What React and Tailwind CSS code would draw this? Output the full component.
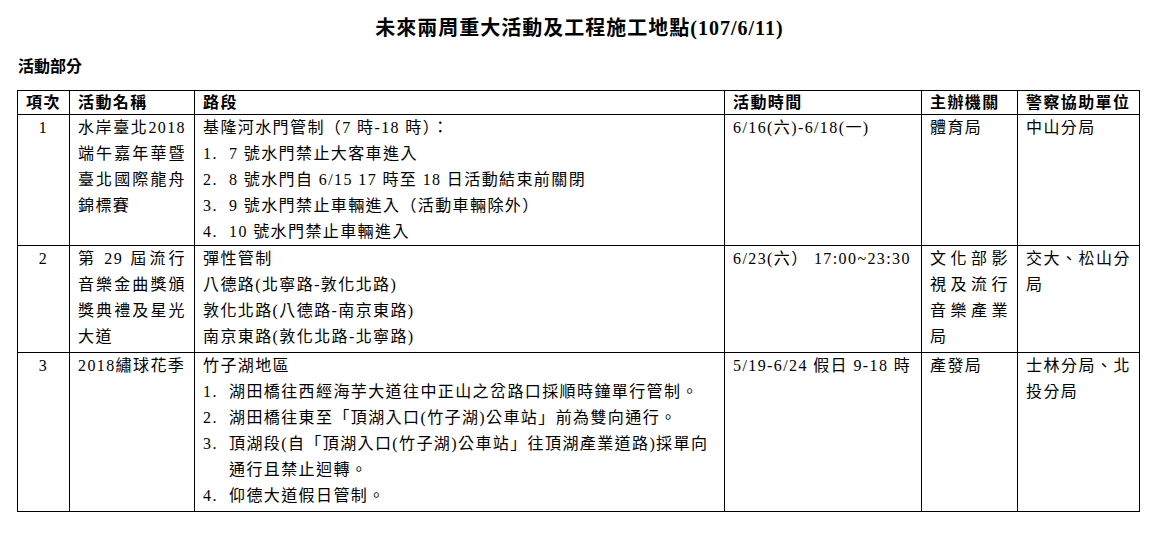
import React from "react";

const J = "[text-align-last:justify]";

const Lines = ({ lines, justify = 0 }) => (
  <div>
    {lines.map((t, i) => (
      <div
        key={i}
        className={
          i < justify
            ? "h-[26px] leading-[26px] whitespace-nowrap [text-align-last:justify]"
            : "h-[26px] leading-[26px] whitespace-nowrap"
        }
      >
        {t}
      </div>
    ))}
  </div>
);

const Item = ({ n, children }) => (
  <div className="flex leading-[26px]">
    <span className="w-[26px] shrink-0 whitespace-nowrap">{n}.</span>
    <span className="whitespace-nowrap">{children}</span>
  </div>
);

const th = "border border-black px-[8px] h-[24px] text-left font-bold leading-[22px] align-middle whitespace-nowrap";
const td = "border border-black px-[8px] align-top";

export default function App() {
  return (
    <div className="w-[1159px] h-[538px] overflow-hidden bg-white text-black font-[family-name:'Liberation_Serif','Noto_Sans_CJK_TC',serif]">
      <h1 className="pt-[16px] text-center text-[20px] leading-[24px] font-bold tracking-[1px]">
        未來兩周重大活動及工程施工地點(107/6/11)
      </h1>
      <div className="mt-[17px] pl-[18px] text-[16px] leading-[20px] font-bold">活動部分</div>
      <div className="mt-[13px] pl-[17px]">
        <table className="w-[1122px] table-fixed border-collapse text-[16px] tracking-[1.4px]">
          <colgroup>
            <col className="w-[52px]" />
            <col className="w-[125px]" />
            <col className="w-[530px]" />
            <col className="w-[197px]" />
            <col className="w-[96px]" />
            <col className="w-[122px]" />
          </colgroup>
          <thead>
            <tr>
              <th className={th}>項次</th>
              <th className={th}>活動名稱</th>
              <th className={th}>路段</th>
              <th className={th}>活動時間</th>
              <th className={th}>主辦機關</th>
              <th className={th}>警察協助單位</th>
            </tr>
          </thead>
          <tbody>
            <tr className="h-[131px]">
              <td className={`${td} text-center leading-[26px]`}>1</td>
              <td className={td}>
                <Lines lines={["水岸臺北2018", "端午嘉年華暨", "臺北國際龍舟", "錦標賽"]} justify={3} />
              </td>
              <td className={td}>
                <div className="leading-[26px] whitespace-nowrap">基隆河水門管制（7 時-18 時）：</div>
                <Item n="1">7 號水門禁止大客車進入</Item>
                <Item n="2">8 號水門自 6/15 17 時至 18 日活動結束前關閉</Item>
                <Item n="3">9 號水門禁止車輛進入（活動車輛除外）</Item>
                <Item n="4">10 號水門禁止車輛進入</Item>
              </td>
              <td className={`${td} leading-[26px] whitespace-nowrap`}>6/16(六)-6/18(一)</td>
              <td className={`${td} leading-[26px]`}>體育局</td>
              <td className={`${td} leading-[26px]`}>中山分局</td>
            </tr>
            <tr className="h-[107px]">
              <td className={`${td} text-center leading-[26px]`}>2</td>
              <td className={td}>
                <Lines lines={["第 29 屆流行", "音樂金曲獎頒", "獎典禮及星光", "大道"]} justify={3} />
              </td>
              <td className={td}>
                <Lines lines={["彈性管制", "八德路(北寧路-敦化北路)", "敦化北路(八德路-南京東路)", "南京東路(敦化北路-北寧路)"]} />
              </td>
              <td className={`${td} leading-[26px] whitespace-nowrap`}>6/23(六） 17:00~23:30</td>
              <td className={td}>
                <Lines lines={["文化部影", "視及流行", "音樂產業", "局"]} justify={3} />
              </td>
              <td className={td}>
                <Lines lines={["交大、松山分", "局"]} justify={1} />
              </td>
            </tr>
            <tr className="h-[159px]">
              <td className={`${td} text-center leading-[26px]`}>3</td>
              <td className={`${td} leading-[26px] whitespace-nowrap`}>2018繡球花季</td>
              <td className={td}>
                <div className="leading-[26px]">竹子湖地區</div>
                <Item n="1">湖田橋往西經海芋大道往中正山之岔路口採順時鐘單行管制。</Item>
                <Item n="2">湖田橋往東至「頂湖入口(竹子湖)公車站」前為雙向通行。</Item>
                <div className="flex leading-[26px]">
                  <span className="w-[26px] shrink-0">3.</span>
                  <div>
                    <div className="whitespace-nowrap">頂湖段(自「頂湖入口(竹子湖)公車站」往頂湖產業道路)採單向</div>
                    <div className="whitespace-nowrap">通行且禁止迴轉。</div>
                  </div>
                </div>
                <Item n="4">仰德大道假日管制。</Item>
              </td>
              <td className={`${td} leading-[26px] whitespace-nowrap`}>5/19-6/24 假日 9-18 時</td>
              <td className={`${td} leading-[26px]`}>產發局</td>
              <td className={td}>
                <Lines lines={["士林分局、北", "投分局"]} justify={1} />
              </td>
            </tr>
          </tbody>
        </table>
      </div>
    </div>
  );
}
